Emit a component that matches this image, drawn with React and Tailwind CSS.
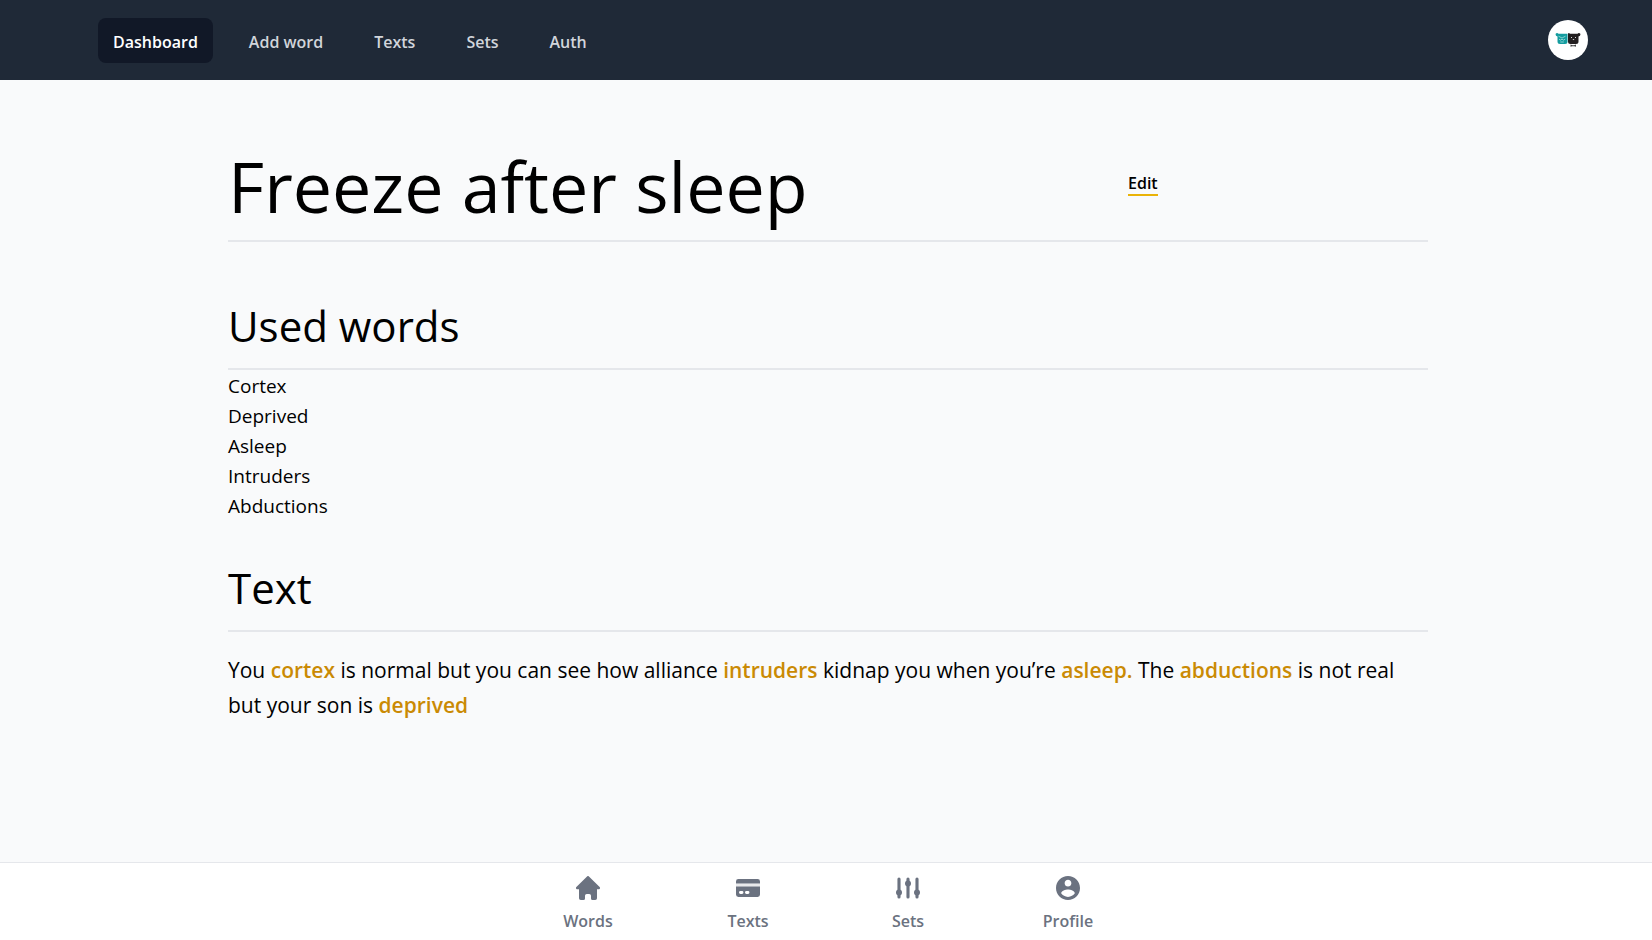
import React from "react";

const topLinks = ["Dashboard", "Add word", "Texts", "Sets", "Auth"];

const usedWords = ["Cortex", "Deprived", "Asleep", "Intruders", "Abductions"];

function HomeIcon() {
  return (
    <svg className="size-6" viewBox="0 0 20 20" fill="currentColor" aria-hidden="true">
      <path d="M9.200.350a1.150 1.150 0 0 1 1.600 0l8.900 8.850c.7.7.2 1.800-.8 1.800h-1.400v7.500q0 1.500-1.500 1.500h-2.200q-1.300 0-1.300-1.300v-2.200q0-1.500-1.500-1.500h-2q-1.500 0-1.500 1.500v2.200q0 1.300-1.300 1.300H4q-1.500 0-1.500-1.500V11H1.100c-1 0-1.500-1.100-.8-1.800Z" />
    </svg>
  );
}

function CardIcon() {
  return (
    <svg className="size-6" viewBox="0 0 20 20" fill="currentColor" aria-hidden="true">
      <path d="M2 2.500h16a2 2 0 0 1 2 2v1.800H0V4.500a2 2 0 0 1 2-2Z" />
      <path
        fillRule="evenodd"
        d="M0 8.800h20v6.700a2 2 0 0 1-2 2H2a2 2 0 0 1-2-2V8.800Zm3.700 3.700a1.200 1.200 0 0 0 0 2.400h1.300a1.200 1.200 0 0 0 0-2.400H3.700Zm5 0a1.200 1.200 0 0 0 0 2.400h1.300a1.200 1.200 0 0 0 0-2.400H8.700Z"
      />
      <path d="M0 6.300h20v2.500H0Z" opacity=".15" />
    </svg>
  );
}

function SlidersIcon() {
  return (
    <svg
      className="size-6"
      viewBox="0 0 20 20"
      fill="currentColor"
      stroke="currentColor"
      strokeLinecap="round"
      strokeWidth="2.6"
      aria-hidden="true"
    >
      <path d="M2.500 2.500v15M10 2.500v15M17.500 2.500v15" />
      <circle cx="2.5" cy="13.800" r="2.500" stroke="none" />
      <circle cx="10" cy="6.200" r="2.500" stroke="none" />
      <circle cx="17.500" cy="13.800" r="2.500" stroke="none" />
    </svg>
  );
}

function ProfileIcon() {
  return (
    <svg className="size-6" viewBox="2 2 20 20" fill="currentColor" aria-hidden="true">
      <path d="M12 2C6.480 2 2 6.480 2 12s4.480 10 10 10 10-4.480 10-10S17.520 2 12 2zm0 3.200c1.550 0 2.800 1.250 2.800 2.800s-1.250 2.800-2.800 2.800-2.800-1.250-2.800-2.800 1.250-2.800 2.800-2.800zm0 14.200c-2.400 0-4.500-1.200-5.700-3 .03-2 3.700-3.200 5.700-3.200s5.670 1.200 5.700 3.200c-1.200 1.800-3.300 3-5.700 3z" />
    </svg>
  );
}

function Avatar() {
  return (
    <svg className="size-10" viewBox="0 0 40 40" aria-hidden="true">
      <circle cx="20" cy="20" r="20" fill="#fff" />
      <path fill="#149c9f" d="M7.500 14q1.500-2 3-.2h7q1-.3 2 0v7.700q0 2.500-2.500 2.500h-5q-2.500 0-2.500-2.500v-5q-2-.5-2-2.500Z" />
      <path fill="#231f20" d="M20 13.500q1-1 2 .3h7.500q1.500-1.800 3 .2 0 2-2 2.500v5q0 2.500-2.500 2.500h-5.500q-2.500 0-2.500-2.500Z" />
      <path
        fill="none"
        stroke="#a9dfe0"
        strokeWidth=".8"
        d="m10.500 16.200 3.500 1.800 3.500-1.800m-6.500 3q1.500 1.800 3 0 1.500 1.800 3.200 0m-4.900 2.800h3.500"
      />
      <path fill="#d8d8d8" d="M23 17h1v1h-1zm4 0h1v1h-1zm-2.500 2h2l-1 1.200z" />
      <path fill="#444" d="M22.500 24.500l2 .8h1.500l2-.8v2.300l-1.700-.6h-2.100l-1.700.6Z" />
    </svg>
  );
}

const bottomLinks = [
  { label: "Words", Icon: HomeIcon },
  { label: "Texts", Icon: CardIcon },
  { label: "Sets", Icon: SlidersIcon },
  { label: "Profile", Icon: ProfileIcon },
];

function Mark({ children }) {
  return <span className="font-semibold text-[#ca8a04]">{children}</span>;
}

export default function App() {
  return (
    <div className="flex min-h-screen flex-col bg-[#f9fafb] font-['Open_Sans','Noto_Sans',sans-serif] text-black">
      <header className="flex h-20 items-center justify-between bg-[#1f2937] pr-16 pl-[98px]">
        <nav className="flex gap-[21px]" aria-label="Main">
          {topLinks.map((label, i) => (
            <a
              key={label}
              href="#"
              aria-current={i === 0 ? "page" : undefined}
              className={
                i === 0
                  ? "rounded-lg bg-[#111827] px-[15px] pt-3 pb-2 text-base leading-[25px] font-semibold text-white"
                  : "rounded-lg px-[15px] pt-3 pb-2 text-base leading-[25px] font-semibold text-[#d1d5db]"
              }
            >
              {label}
            </a>
          ))}
        </nav>
        <button type="button" aria-label="Open user menu" className="rounded-full">
          <Avatar />
        </button>
      </header>

      <main className="flex-1 pl-1">
        <div className="mx-auto max-w-[1200px]">
          <div className="grid grid-cols-4 items-center border-b-2 border-[#e5e7eb] pt-[60px] pb-3">
            <h1 className="col-span-3 pt-1 text-[70px] leading-[84px]">Freeze after sleep</h1>
            <div className="pb-0.5 leading-6">
              <a href="#" className="border-b-2 border-[#eab308] text-base font-semibold">
                Edit
              </a>
            </div>
          </div>

          <section>
            <h2 className="border-b-2 border-[#e5e7eb] pt-[59px] pb-[17px] text-[42px] leading-[50px]">Used words</h2>
            <ul className="pt-px text-[19px] leading-[30px]">
              {usedWords.map((word) => (
                <li key={word}>{word}</li>
              ))}
            </ul>
          </section>

          <section>
            <h2 className="border-b-2 border-[#e5e7eb] pt-[42px] pb-[17px] text-[42px] leading-[50px]">Text</h2>
            <p className="pt-[21px] text-[21px] leading-[35px]">
              You <Mark>cortex</Mark> is normal but you can see how alliance <Mark>intruders</Mark> kidnap you when
              you’re <Mark>asleep.</Mark> The <Mark>abductions</Mark> is not real but your son is{" "}
              <Mark>deprived</Mark>
            </p>
          </section>
        </div>
      </main>

      <nav className="sticky bottom-0 border-t border-[#e5e7eb] bg-white pl-1" aria-label="Sections">
        <div className="mx-auto grid max-w-[640px] grid-cols-4">
          {bottomLinks.map(({ label, Icon }) => (
            <a
              key={label}
              href="#"
              className="flex flex-col items-center gap-[9px] pt-[13px] pb-[6px] text-base leading-[25px] font-semibold text-[#6b7280]"
            >
              <Icon />
              {label}
            </a>
          ))}
        </div>
      </nav>
    </div>
  );
}
